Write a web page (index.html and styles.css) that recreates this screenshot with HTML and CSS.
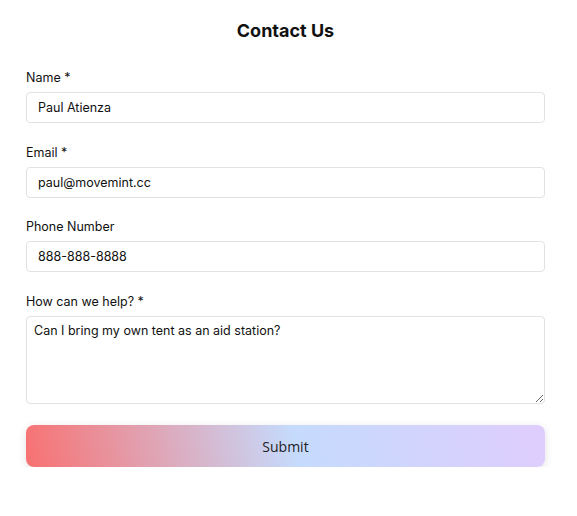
FILE: index.html
```html
<!DOCTYPE html>
<html>
<head>
<meta charset="utf-8">
<link rel="stylesheet" href="styles.css">
</head>
<body>
<div class="page">
  <h1 class="title">Contact Us</h1>
  <form class="form">
    <label class="field">
      <span class="label">Name *</span>
      <input class="input" type="text" value="Paul Atienza">
    </label>
    <label class="field">
      <span class="label">Email *</span>
      <input class="input" type="text" value="paul@movemint.cc">
    </label>
    <label class="field">
      <span class="label">Phone Number</span>
      <input class="input" type="text" value="888-888-8888">
    </label>
    <label class="field">
      <span class="label">How can we help? *</span>
      <textarea class="input textarea">Can I bring my own tent as an aid station?</textarea>
    </label>
    <button class="submit" type="button">Submit</button>
  </form>
</div>
</body>
</html>
```
FILE: styles.css
```css
* { box-sizing: border-box; }
body {
  margin: 0;
  background: #fff;
  font-family: Inter, "Noto Sans", sans-serif;
  color: #111;
}
.page {
  width: 519px;
  margin-left: 26px;
  padding-top: 19px;
}
.title {
  margin: 0;
  text-align: center;
  font-size: 18px;
  font-weight: 700;
  line-height: 24px;
  color: #111;
}
.form {
  display: flex;
  flex-direction: column;
  gap: 21.5px;
  margin-top: 27px;
}
.field {
  display: flex;
  flex-direction: column;
  gap: 6px;
}
.label {
  font-size: 12.5px;
  line-height: 16px;
  color: #111;
}
.input {
  display: block;
  width: 100%;
  height: 31px;
  border: 1px solid #e2e2e2;
  border-radius: 4px;
  padding: 0 11px;
  font-family: Inter, sans-serif;
  font-size: 12.5px;
  color: #111;
  background: #fff;
  outline: none;
}
.textarea {
  height: 88px;
  padding: 6px 7px;
  line-height: 16px;
  resize: vertical;
}
.submit {
  margin-top: 0;
  height: 42px;
  width: 100%;
  border: none;
  border-radius: 8px;
  background: linear-gradient(78deg, #f87171, #c5dbfd 52%, #dfcdfd);
  box-shadow: 0 2px 8px rgba(0,0,0,0.12);
  font-family: "Open Sans", sans-serif;
  font-size: 14px;
  color: #222;
}
```
